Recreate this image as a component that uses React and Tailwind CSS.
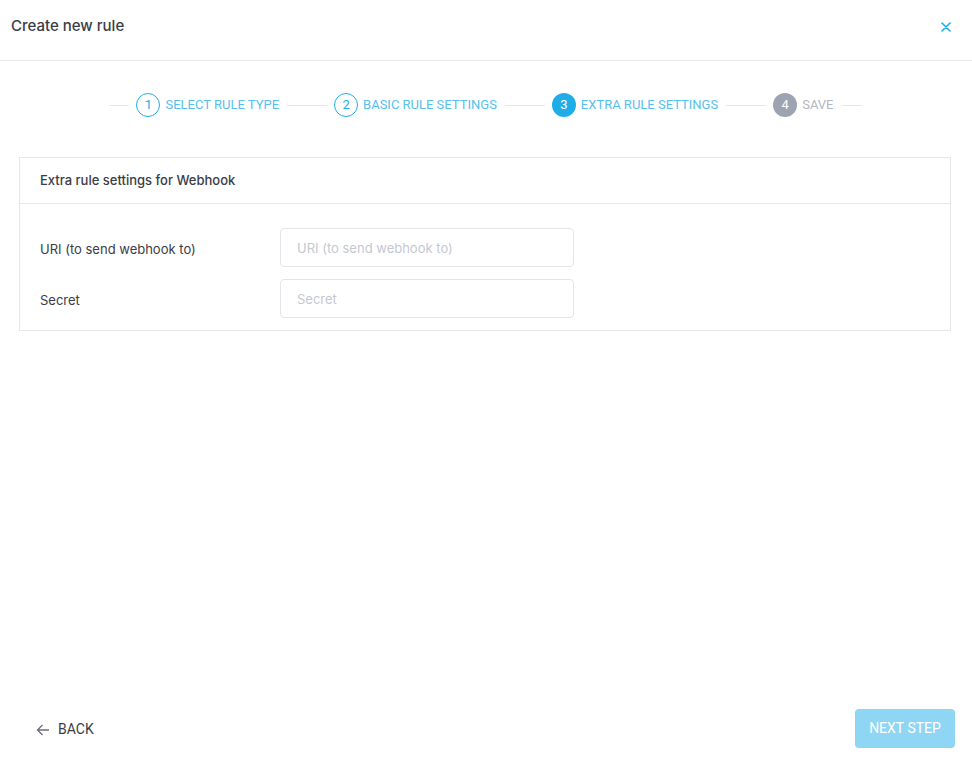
import React from "react";

const Line = () => <div className="h-px w-5 bg-[#e4e6eb]" />;

function Step({ n, label, state }) {
  const circle =
    state === "done"
      ? "border border-[#1fade8] text-[#1fade8] bg-white"
      : state === "active"
      ? "bg-[#1fade8] text-white"
      : "bg-[#9ea3b2] text-white";
  const text = state === "todo" ? "text-[#b3b7c3]" : "text-[#55bfee]";
  return (
    <div className="flex items-center">
      <Line />
      <div className={`ml-[7px] flex h-6 w-6 items-center justify-center rounded-full text-[13px] ${circle}`}>
        {n}
      </div>
      <div className={`ml-[5px] text-[13px] ${text}`}>{label}</div>
      <div className="ml-2">
        <Line />
      </div>
    </div>
  );
}

export default function App() {
  return (
    <div
      className="flex h-[765px] w-[972px] flex-col bg-white text-[#3a3c47]"
      style={{ fontFamily: "Inter, 'Noto Sans', sans-serif" }}
    >
      <div className="flex h-[61px] shrink-0 items-center justify-between border-b border-[#e6e7eb] pb-2 pl-[11px] pr-[21px]">
        <div className="text-[15px] font-medium text-[#3a3c47]">Create new rule</div>
        <svg width="10" height="10" viewBox="0 0 10 10" className="mt-px">
          <path d="M1 1L9 9M9 1L1 9" stroke="#1fade8" strokeWidth="1.6" strokeLinecap="round" />
        </svg>
      </div>

      <div
        className="flex h-[86px] shrink-0 items-center justify-center pr-[1px] pt-[2px]"
        style={{ fontFamily: "Roboto, 'Liberation Sans', sans-serif" }}
      >
        <Step n="1" label="SELECT RULE TYPE" state="done" />
        <Step n="2" label="BASIC RULE SETTINGS" state="done" />
        <Step n="3" label="EXTRA RULE SETTINGS" state="active" />
        <Step n="4" label="SAVE" state="todo" />
      </div>

      <div className="mx-[19px] mt-[10px] w-[932px] border border-[#e6e7eb]">
        <div className="flex h-[46px] items-center border-b border-[#e6e7eb] px-5 text-[13px] font-medium text-[#3a3c47]">
          Extra rule settings for Webhook
        </div>
        <div className="flex flex-col gap-3 px-5 pb-3 pt-6 text-[13px]">
          <div className="flex items-center">
            <div className="w-[240px] pt-[4px]">URI (to send webhook to)</div>
            <input
              className="h-[39px] w-[294px] rounded border border-[#e3e5ea] px-4 text-[13px] placeholder:text-[#c5c8d2] outline-none"
              placeholder="URI (to send webhook to)"
            />
          </div>
          <div className="flex items-center">
            <div className="w-[240px] pt-[4px]">Secret</div>
            <input
              className="h-[39px] w-[294px] rounded border border-[#e3e5ea] px-4 text-[13px] placeholder:text-[#c5c8d2] outline-none"
              placeholder="Secret"
            />
          </div>
        </div>
      </div>

      <div className="flex-1" />

      <div
        className="flex h-[56px] shrink-0 items-start justify-between pl-[36px] pr-[17px]"
        style={{ fontFamily: "Roboto, 'Liberation Sans', sans-serif" }}
      >
        <div className="mt-[10px] flex items-center gap-[8px] text-[14px] text-[#3a3c47]">
          <svg width="14" height="12" viewBox="0 0 14 12">
            <path d="M13 6H1.5M6.5 1L1.5 6L6.5 11" fill="none" stroke="#6b6e7a" strokeWidth="1.3" />
          </svg>
          BACK
        </div>
        <button className="h-[39px] w-[100px] rounded bg-[#8fd6f5] text-[14px] text-white">NEXT STEP</button>
      </div>
    </div>
  );
}
